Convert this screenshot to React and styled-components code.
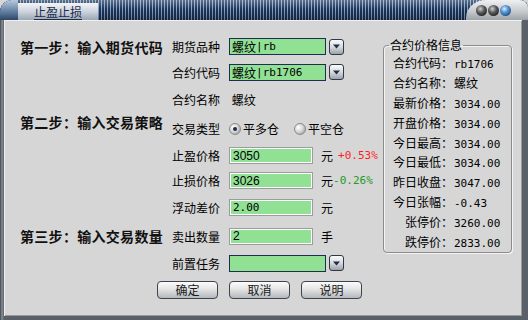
import React from 'react';
import styled, { createGlobalStyle } from 'styled-components';

const GlobalStyle = createGlobalStyle`
  html, body { margin: 0; padding: 0; background: #d6d6d6; }
  body {
    font-family: "Noto Sans CJK SC", "Liberation Sans", sans-serif;
    font-size: 12px;
    color: #000;
  }
`;

// 窗口外框
const Window = styled.div`
  width: 528px;
  height: 320px;
  display: flex;
  flex-direction: column;
  overflow: hidden;
  background: linear-gradient(90deg, #3e454c 0, #8a9098 2px, #5a6068 4px);
  border-radius: 12px 8px 0 0;
`;

// 标题栏
const TitleBar = styled.div`
  height: 20px;
  flex-shrink: 0;
  display: flex;
  background:
    linear-gradient(180deg, rgba(255,255,255,.3) 0%, rgba(255,255,255,0) 45%, rgba(0,0,0,.3) 100%),
    repeating-linear-gradient(90deg, #1d3457 0 2px, #86a4c8 2px 3px);
`;

const Corner = styled.div`
  width: 18px;
  background: linear-gradient(180deg, #b8cade 0%, #5e7c9e 60%, #2e4666 100%);
  border-top-left-radius: 12px;
`;

const Tab = styled.div`
  width: 80px;
  margin-top: 3px;
  display: flex;
  align-items: center;
  justify-content: center;
  background: linear-gradient(180deg, #f2f5f8 0%, #cdd4dc 50%, #9aa6b4 100%);
  color: #1c2c50;
  text-decoration: underline;
  text-underline-offset: 2px;
  font-size: 12px;
  line-height: 1;
`;

const Stripes = styled.div`
  flex: 1;
`;

const RightCap = styled.div`
  width: 62px;
  display: flex;
  align-items: center;
  gap: 1px;
  padding-left: 10px;
  box-sizing: border-box;
  background: linear-gradient(180deg, #eef0f2 0%, #c4c8cc 60%, #9ca2a8 100%);
  border-top-left-radius: 20px 18px;
  border-top-right-radius: 8px;
`;

const Ball = styled.span`
  width: 11px;
  height: 11px;
  border-radius: 50%;
  background: ${p => p.$blue
    ? 'radial-gradient(circle at 40% 35%, #e0f0ff 0, #5a9ad6 35%, #1c4a80 80%)'
    : 'radial-gradient(circle at 40% 35%, #d0d0d0 0, #5a5a5a 40%, #1a1a1a 85%)'};
`;

// 主体
const Body = styled.div`
  flex: 1;
  margin: 0 6px 4px 4px;
  display: flex;
  align-items: flex-start;
  padding: 14px 0 0 16px;
  background: #d6d6d6;
  box-shadow: inset 1px 1px 0 #f0f0f0, inset -1px -1px 0 #9a9a9a;
`;

const FormGrid = styled.div`
  width: 352px;
  display: grid;
  grid-template-columns: 151px 58px 1fr;
  grid-template-rows: 25px 26px 29px 29px 25px 25px 29px 28px 26px 27px;
  align-items: center;
`;

const StepTitle = styled.div`
  grid-column: 1;
  grid-row: ${p => p.$row};
  align-self: ${p => (p.$top ? 'start' : 'center')};
  font-size: 14px;
  font-weight: 700;
  letter-spacing: 0.3px;
  line-height: 16px;
  color: #111;
  white-space: nowrap;
`;

const FieldLabel = styled.div`
  grid-column: 2;
  grid-row: ${p => p.$row};
  padding-left: 1px;
  white-space: nowrap;
`;

const Field = styled.div`
  grid-column: 3;
  grid-row: ${p => p.$row};
  display: flex;
  align-items: center;
  white-space: nowrap;
`;

const Num = styled.span`
  font-family: "DejaVu Sans Mono", "Liberation Mono", monospace;
  font-size: 11px;
  color: ${p => p.$color || 'inherit'};
`;

const ComboBox = styled.div`
  width: 97px;
  height: 17px;
  box-sizing: border-box;
  border: 1px solid #1e2e50;
  background: #90e194;
  display: flex;
  align-items: center;
  padding: 0 2px;
`;

const DropButton = styled.div`
  width: 15px;
  height: 16px;
  margin-left: 3px;
  box-sizing: border-box;
  border: 1px solid #2e3846;
  border-radius: 3px;
  background: linear-gradient(180deg, #fbfbfb 0%, #d8dadc 50%, #9ca2aa 100%);
  display: flex;
  align-items: center;
  justify-content: center;
`;

const TextBox = styled.div`
  width: 84px;
  height: 17px;
  box-sizing: border-box;
  border: 1px solid #9c9c9c;
  box-shadow: inset 0 0 0 1px #fff;
  background: #90e194;
  display: flex;
  align-items: center;
  padding: 0 3px;
  font-family: ${p => (p.$mono ? '"DejaVu Sans Mono", monospace' : '"Liberation Sans", sans-serif')};
  font-size: ${p => (p.$mono ? '11px' : '12px')};
`;

const Unit = styled.span`
  margin-left: 8px;
  margin-right: ${p => p.$gap || 0}px;
`;

const Radio = styled.span`
  width: 12px;
  height: 12px;
  box-sizing: border-box;
  border-radius: 50%;
  border: 1px solid #8a8a8a;
  background: radial-gradient(circle at 35% 35%, #ffffff 0, #d8d8d8 45%, #8c8c8c 100%);
  display: inline-flex;
  align-items: center;
  justify-content: center;
  margin-right: 2px;
  &::after {
    content: '';
    width: 4px;
    height: 4px;
    border-radius: 50%;
    background: ${p => (p.$checked ? '#1e2e50' : 'transparent')};
  }
`;

const RadioOption = styled.label`
  display: inline-flex;
  align-items: center;
  margin-right: 15px;
`;

const ButtonRow = styled.div`
  grid-column: 1 / -1;
  grid-row: 10;
  display: flex;
  gap: 11px;
  padding-left: 137px;
`;

const Button = styled.button`
  width: 61px;
  height: 18px;
  padding: 0;
  border: 1px solid #3c4450;
  border-radius: 4px;
  background: linear-gradient(180deg, #fcfcfc 0%, #e4e4e4 45%, #b4b8bc 100%);
  font-family: "Noto Sans CJK SC", sans-serif;
  font-size: 12px;
  line-height: 1;
  color: #1a1a1a;
`;

// 右侧信息框
const InfoBox = styled.fieldset`
  margin: 3px 0 0 11px;
  width: 129px;
  height: 216px;
  box-sizing: border-box;
  padding: 0 0 0 3px;
  border: 1px solid #8c8c8c;
  border-radius: 4px;
  box-shadow: 1px 1px 0 #f4f4f4, inset 1px 1px 0 #f4f4f4;
  display: grid;
  grid-template-columns: 66px 1fr;
  grid-auto-rows: 19.8px;
  align-items: center;
`;

const Legend = styled.legend`
  padding: 0 1px;
  margin-left: 2px;
  line-height: 16px;
`;

const InfoLabel = styled.span`
  text-align: right;
  white-space: nowrap;
`;

const InfoValue = styled.span`
  padding-left: 1px;
  white-space: nowrap;
`;

const Arrow = () => (
  <svg width="7" height="5" viewBox="0 0 7 5">
    <path d="M0 0.5 H7 L3.5 4.5 Z" fill="#1e2e50" />
  </svg>
);

const info = [
  ['合约代码：', 'rb1706', true],
  ['合约名称：', '螺纹', false],
  ['最新价格：', '3034.00', true],
  ['开盘价格：', '3034.00', true],
  ['今日最高：', '3034.00', true],
  ['今日最低：', '3034.00', true],
  ['昨日收盘：', '3047.00', true],
  ['今日张幅：', '-0.43', true],
  ['张停价：', '3260.00', true],
  ['跌停价：', '2833.00', true],
];

export default function App() {
  return (
    <>
      <GlobalStyle />
      <Window>
        <TitleBar>
          <Corner />
          <Tab>止盈止损</Tab>
          <Stripes />
          <RightCap>
            <Ball />
            <Ball />
            <Ball $blue />
          </RightCap>
        </TitleBar>
        <Body>
          <FormGrid>
            <StepTitle $row={1}>第一步：输入期货代码</StepTitle>
            <FieldLabel $row={1}>期货品种</FieldLabel>
            <Field $row={1}>
              <ComboBox>螺纹<Num>|rb</Num></ComboBox>
              <DropButton><Arrow /></DropButton>
            </Field>

            <FieldLabel $row={2}>合约代码</FieldLabel>
            <Field $row={2}>
              <ComboBox>螺纹<Num>|rb1706</Num></ComboBox>
              <DropButton><Arrow /></DropButton>
            </Field>

            <FieldLabel $row={3}>合约名称</FieldLabel>
            <Field $row={3}>&nbsp;螺纹</Field>

            <StepTitle $row={4} $top>第二步：输入交易策略</StepTitle>
            <FieldLabel $row={4}>交易类型</FieldLabel>
            <Field $row={4}>
              <RadioOption><Radio $checked />平多仓</RadioOption>
              <RadioOption><Radio />平空仓</RadioOption>
            </Field>

            <FieldLabel $row={5}>止盈价格</FieldLabel>
            <Field $row={5}>
              <TextBox>3050</TextBox>
              <Unit $gap={5}>元</Unit>
              <Num $color="#ff1e1e">+0.53%</Num>
            </Field>

            <FieldLabel $row={6}>止损价格</FieldLabel>
            <Field $row={6}>
              <TextBox>3026</TextBox>
              <Unit>元</Unit>
              <Num $color="#249a24">-0.26%</Num>
            </Field>

            <FieldLabel $row={7}>浮动差价</FieldLabel>
            <Field $row={7}>
              <TextBox $mono>2.00</TextBox>
              <Unit>元</Unit>
            </Field>

            <StepTitle $row={8}>第三步：输入交易数量</StepTitle>
            <FieldLabel $row={8}>卖出数量</FieldLabel>
            <Field $row={8}>
              <TextBox>2</TextBox>
              <Unit>手</Unit>
            </Field>

            <FieldLabel $row={9}>前置任务</FieldLabel>
            <Field $row={9}>
              <ComboBox />
              <DropButton><Arrow /></DropButton>
            </Field>

            <ButtonRow>
              <Button>确定</Button>
              <Button>取消</Button>
              <Button>说明</Button>
            </ButtonRow>
          </FormGrid>

          <InfoBox>
            <Legend>合约价格信息</Legend>
            {info.map(([label, value, num]) => (
              <React.Fragment key={label}>
                <InfoLabel>{label}</InfoLabel>
                <InfoValue>{num ? <Num>{value}</Num> : value}</InfoValue>
              </React.Fragment>
            ))}
          </InfoBox>
        </Body>
      </Window>
    </>
  );
}
